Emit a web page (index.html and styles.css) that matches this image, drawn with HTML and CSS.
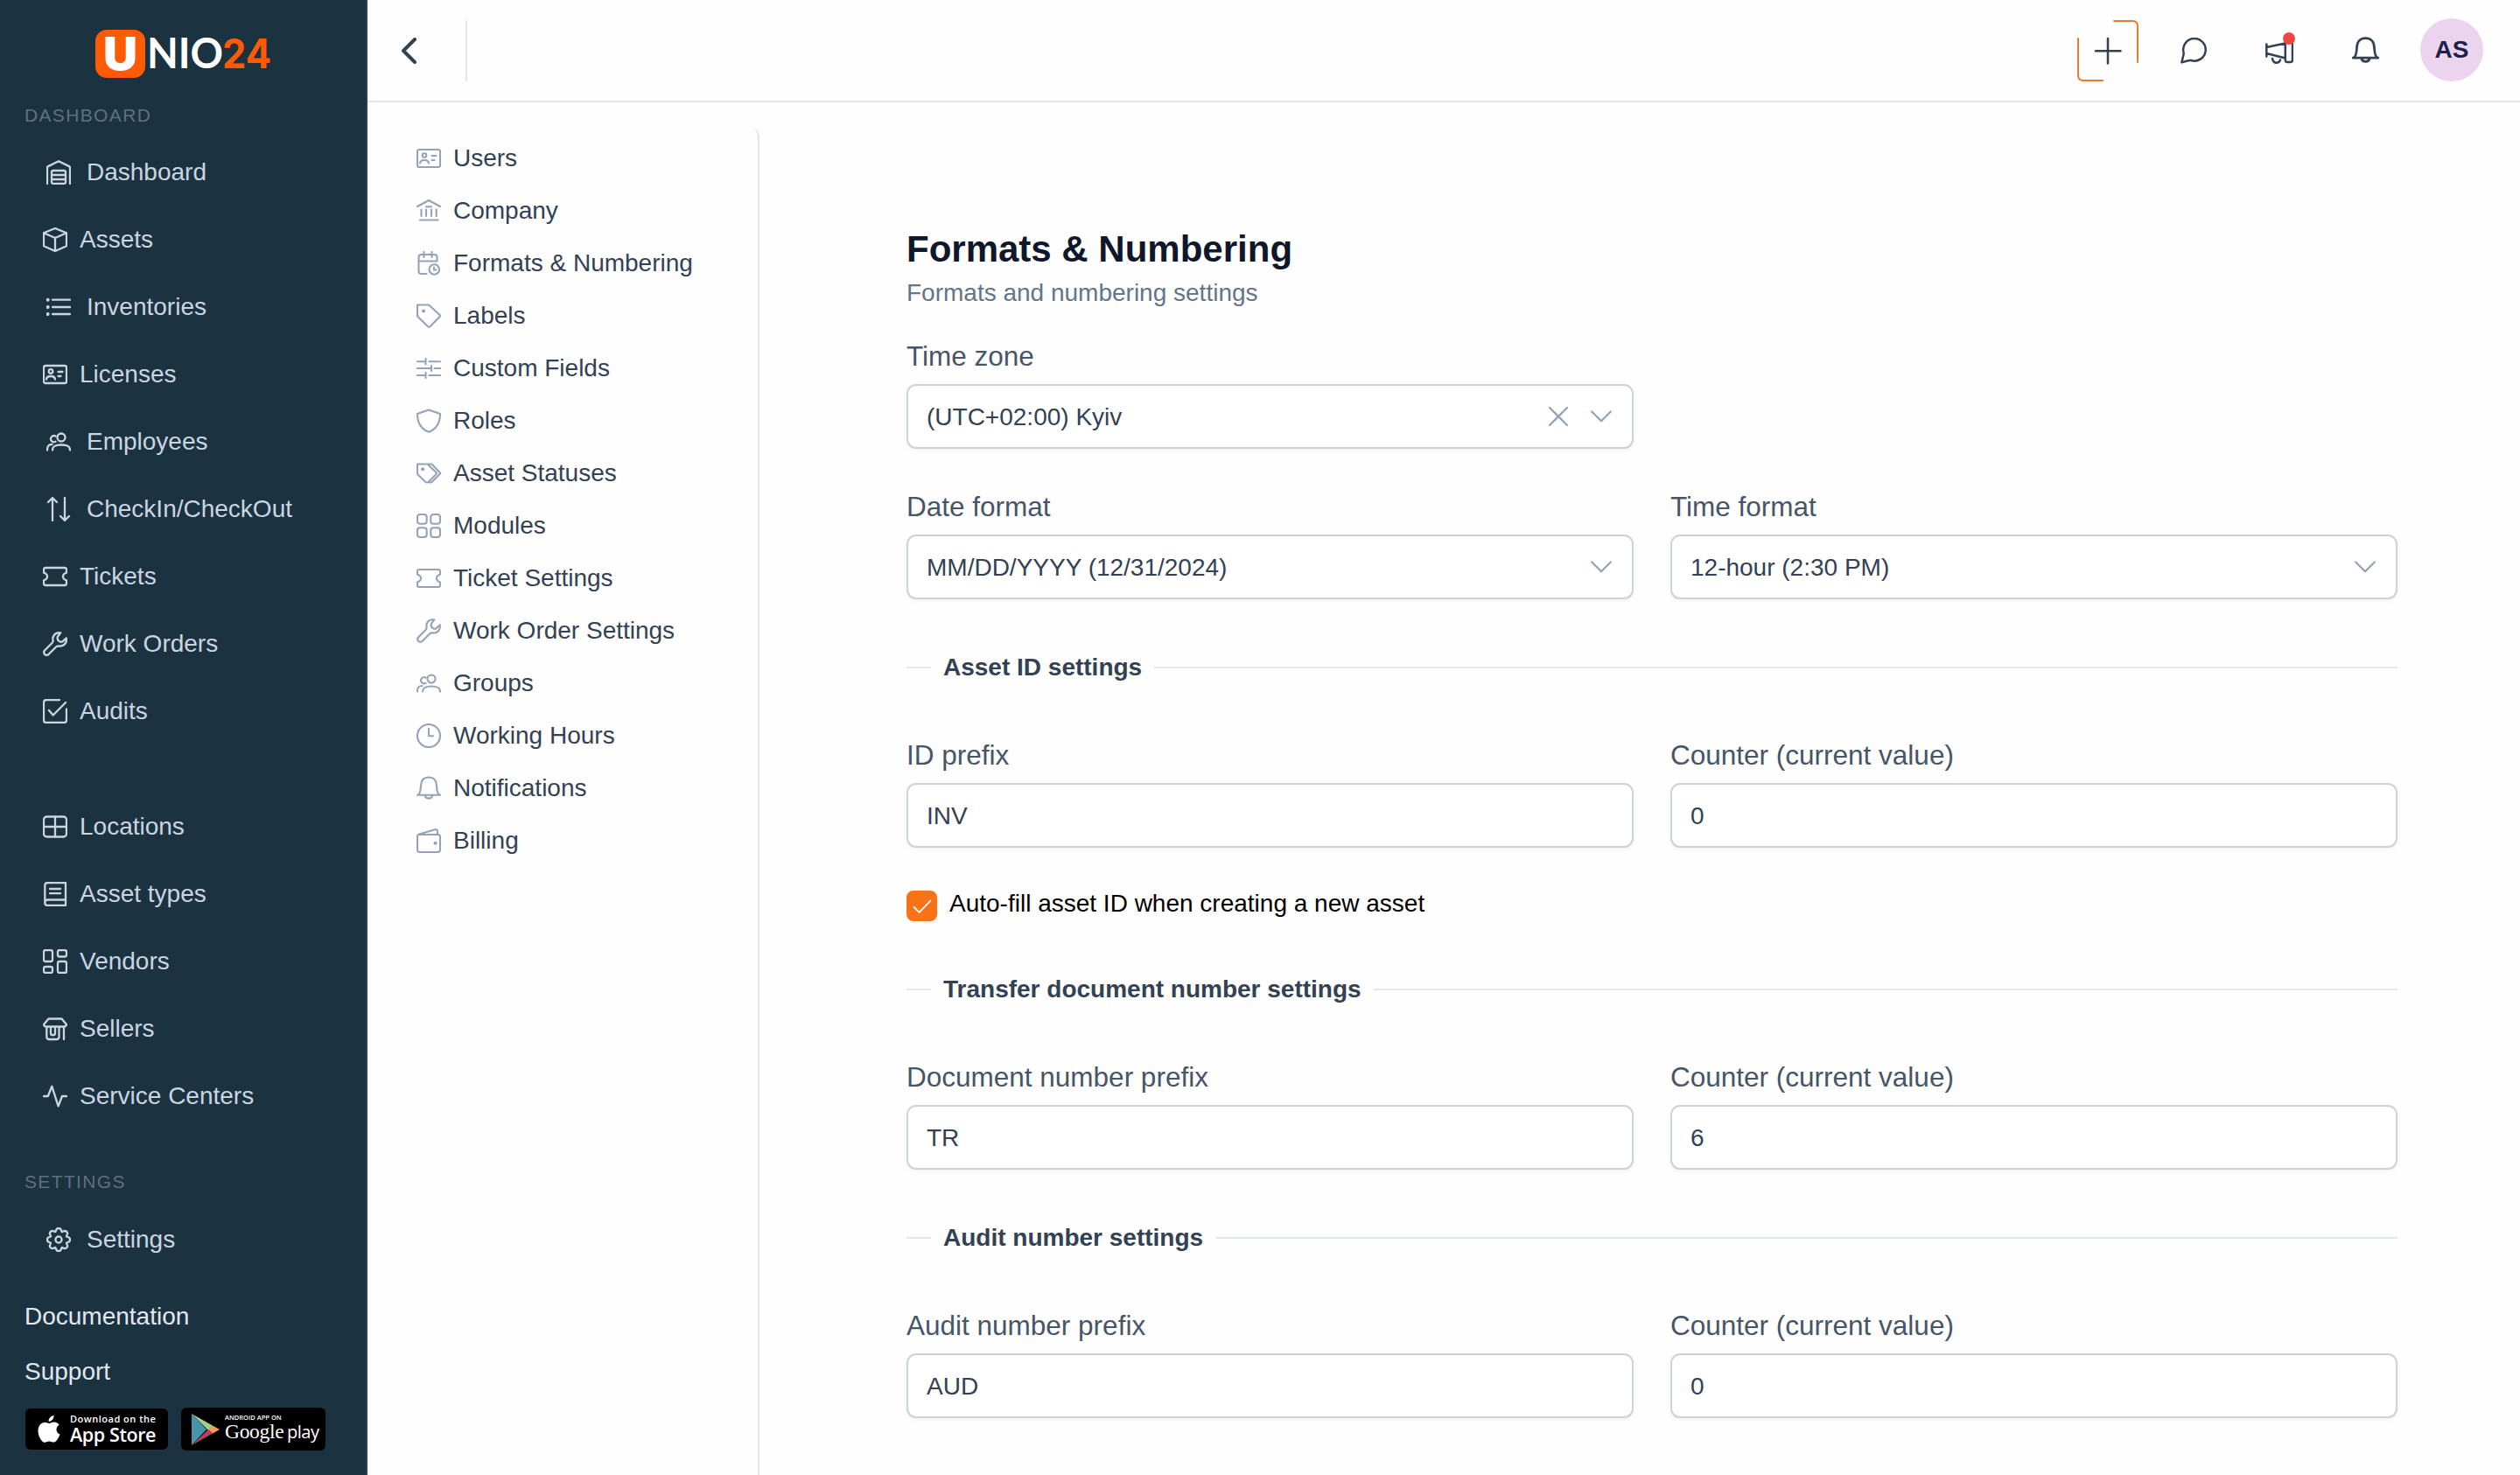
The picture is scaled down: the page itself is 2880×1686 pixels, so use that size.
FILE: index.html
```html
<!DOCTYPE html>
<html lang="en">
<head>
<meta charset="utf-8">
<title>Formats &amp; Numbering</title>
<link rel="stylesheet" href="styles.css">
</head>
<body>
<svg class="sprite" aria-hidden="true">
  <symbol id="warehouse" viewBox="0 0 28 28"><path d="M1 27V8.6Q1 7.6 2 7.1L14 1.2L26 7.1Q27 7.6 27 8.6V27M8 12H20Q22 12 22 14V25Q22 27 20 27H8Q6 27 6 25V14Q6 12 8 12ZM6 17H22M6 22H22"/></symbol>
  <symbol id="box" viewBox="0 0 28 28"><path d="M14 1L27 6.2V21.2L14 27L1 21.2V6.2ZM1 6.2L14 12L27 6.2M14 12V27"/></symbol>
  <symbol id="list" viewBox="0 0 28 28"><path d="M7 5.7H27M7 14H27M7 22H27"/><path class="thick" d="M1.6 5.7h.1M1.6 14h.1M1.6 22h.1"/></symbol>
  <symbol id="idcard" viewBox="0 0 28 28"><rect x="1" y="4" width="26" height="20" rx="2"/><circle cx="9" cy="10.5" r="2.3"/><path d="M4 19.5Q4.500 16 9 16T14 19.500M17.500 11H22.500M17.500 16H20.500"/></symbol>
  <symbol id="users" viewBox="0 0 28 28"><circle cx="17" cy="9" r="4.500"/><path d="M10.500 7.600A3.600 3.600 0 1 0 10.500 13.800M7 23.500C7 19 10 17.500 17 17.500S27 19 27 23.500M1 23.500C1 18.500 2.500 17 6.500 17"/></symbol>
  <symbol id="sort" viewBox="0 0 28 28"><path d="M7 27V1.500M2 6L7 1.200L12 6M21 1V26.500M16 22L21 26.800L26 22"/></symbol>
  <symbol id="ticket" viewBox="0 0 28 28"><path d="M3 4H25Q27 4 27 6V9.600C21.600 11.400 21.600 16.600 27 18.400V22Q27 24 25 24H3Q1 24 1 22V18.400C6.400 16.600 6.400 11.400 1 9.600V6Q1 4 3 4Z"/></symbol>
  <symbol id="wrench" viewBox="0 0 28 28"><path d="M20.300 1.400Q15.500 .6 12.800 4Q10.800 6.500 11.600 10.500Q11.500 12 10.500 13L2 21.500Q.3 23.500 2 25.800Q4.300 27.800 6.500 26L15 17.500Q16 16.500 17.500 16.400Q22.500 17.200 25.200 14Q27.600 11.200 26.700 7.300L22.500 11.300Q20.300 12.500 18.200 10.600Q15.900 8.600 16.900 5.800Z"/></symbol>
  <symbol id="checksq" viewBox="0 0 28 28"><path d="M19 1H4Q1 1 1 4V24Q1 27 4 27H24Q27 27 27 24V11.500M6.800 12.800L11.700 18.500L26 4"/></symbol>
  <symbol id="table" viewBox="0 0 28 28"><rect x="1" y="2.500" width="26" height="23" rx="3.500"/><path d="M14 2.500V25.500M1 14H27"/></symbol>
  <symbol id="book" viewBox="0 0 28 28"><path d="M26 1V27H5.500Q2.300 27 2.300 24V4.500Q2.300 1 5.500 1ZM26 20.500H5.500Q2.300 20.500 2.300 24M8 8H20M8 13.200H20"/></symbol>
  <symbol id="objects" viewBox="0 0 28 28"><rect x="1" y="1" width="10" height="13" rx="2"/><rect x="17" y="1" width="10" height="7.500" rx="2"/><rect x="1" y="20" width="10" height="7" rx="2"/><rect x="17" y="14" width="10" height="13" rx="2"/></symbol>
  <symbol id="shop" viewBox="0 0 28 28"><path d="M6.500 2.500H21.500L27 9Q26.500 11.500 24 11.500H4Q1.500 11.500 1 9ZM4.300 11.500V23Q4.300 26 7.300 26H15.500Q18.500 26 18.500 23V11.500M24 11.500V26M9 12V19Q9 21 10.500 21H12.500Q14 21 14 19V12"/></symbol>
  <symbol id="wave" viewBox="0 0 28 28"><path d="M1 14H5.800L10.300 2.700L17.600 25.300L22 14H27"/></symbol>
  <symbol id="cog" viewBox="-14 -14 28 28"><path d="M12.200-2.200Q13.800 0 12.200 2.200L8.900 3.700L10.200 7.100Q9.800 9.800 7.100 10.200L3.700 8.900L2.200 12.200Q0 13.800-2.200 12.200L-3.700 8.900L-7.100 10.200Q-9.800 9.800-10.200 7.100L-8.900 3.700L-12.200 2.200Q-13.800 0-12.200-2.200L-8.900-3.700L-10.200-7.100Q-9.800-9.800-7.100-10.200L-3.700-8.900L-2.200-12.200Q0-13.800 2.200-12.200L3.700-8.900L7.100-10.200Q9.800-9.800 10.200-7.100L8.900-3.700Z"/><circle r="3.600"/></symbol>
  <symbol id="bank" viewBox="0 0 28 28"><path d="M1 9L14 2L27 9M11 9.200H17M5.500 12.500V20M11 12.500V20M17 12.500V20M22.700 12.500V20M4 24.500H24.500"/></symbol>
  <symbol id="calclock" viewBox="0 0 28 28"><path d="M11.500 26H5.500Q2.500 26 2.500 23V7Q2.500 4 5.500 4H20.500Q23.500 4 23.500 7V11.500H2.500M8.500 1V7M17.500 1V7M20 18.500V21.500H22.500"/><circle cx="20.300" cy="21" r="5.800"/></symbol>
  <symbol id="tag" viewBox="0 0 28 28"><path d="M1 1.500H14L26.300 12.700Q27.500 14 26.300 15.300L15.800 26Q14.300 27.200 12.800 26L1 14.500Z"/><path class="thick" d="M8 8.500h.1"/></symbol>
  <symbol id="sliders" viewBox="0 0 28 28"><path d="M1 6.200H10.500M14.500 6.200H27M10.500 3V9.500M1 14H16.500M20.500 14H27M17 11V17M1 22H10.500M14.500 22H27M10.500 19V25"/></symbol>
  <symbol id="shield" viewBox="0 0 28 28"><path d="M1 6L14 1.500L27 6C27 16.500 22.500 23.500 14 26.800C5.500 23.500 1 16.500 1 6Z"/></symbol>
  <symbol id="tags" viewBox="0 0 28 28"><path d="M1 3.500H12.500L22.500 13Q23.500 14 22.500 15L13.500 24Q12 25 10.500 24L1 15ZM12.500 3.500H17.500L26.500 13Q27.500 14 26.500 15L17.500 24Q16 25 14.500 24.200"/><path class="thick" d="M7 9.300h.1"/></symbol>
  <symbol id="grid" viewBox="0 0 28 28"><rect x="1" y="1" width="10.700" height="10.700" rx="3"/><rect x="16.300" y="1" width="10.700" height="10.700" rx="3"/><rect x="1" y="16.300" width="10.700" height="10.700" rx="3"/><rect x="16.300" y="16.300" width="10.700" height="10.700" rx="3"/></symbol>
  <symbol id="clock" viewBox="0 0 28 28"><circle cx="14" cy="14" r="13"/><path d="M14 6V14.300H19"/></symbol>
  <symbol id="bell" viewBox="0 0 28 28"><path d="M1 21.800C4.500 21.500 4.800 15 5 11C5.200 4.500 9 1.500 14 1.500S22.800 4.500 23 11C23.200 15 23.500 21.500 27 21.800ZM9.800 22.500A4.300 4 0 0 0 18.200 22.500"/></symbol>
  <symbol id="wallet" viewBox="0 0 28 28"><rect x="1" y="7" width="26" height="20" rx="2.500"/><path d="M3 6.500L21 1.200Q24 .8 24 3.500V7"/><path class="thick" d="M21.500 16.800h.1"/></symbol>
  <symbol id="chev" viewBox="0 0 28 28"><path d="M3.200 8.500L14 19.300L24.800 8.500"/></symbol>
</svg>

<div class="app">
  <aside class="sidebar">
    <a class="logo">
      <svg viewBox="0 0 220 60" width="220" height="60">
        <rect width="57" height="55" rx="13" fill="#ff5a05"/>
        <text x="9" y="45.500" class="logo-u" textLength="39" lengthAdjust="spacingAndGlyphs">U</text>
        <text x="59" y="44" class="logo-name" textLength="87" lengthAdjust="spacingAndGlyphs">NIO</text>
        <text x="145" y="44" class="logo-num" textLength="56" lengthAdjust="spacingAndGlyphs">24</text>
      </svg>
    </a>
    <h6 class="kicker">DASHBOARD</h6>
    <nav class="nav">
      <a class="group"><svg><use href="#warehouse"/></svg>Dashboard</a>
      <a><svg><use href="#box"/></svg>Assets</a>
      <a class="group"><svg><use href="#list"/></svg>Inventories</a>
      <a><svg><use href="#idcard"/></svg>Licenses</a>
      <a class="group"><svg><use href="#users"/></svg>Employees</a>
      <a class="group"><svg><use href="#sort"/></svg>CheckIn/CheckOut</a>
      <a><svg><use href="#ticket"/></svg>Tickets</a>
      <a><svg><use href="#wrench"/></svg>Work Orders</a>
      <a><svg><use href="#checksq"/></svg>Audits</a>
    </nav>
    <nav class="nav nav-second">
      <a><svg><use href="#table"/></svg>Locations</a>
      <a><svg><use href="#book"/></svg>Asset types</a>
      <a><svg><use href="#objects"/></svg>Vendors</a>
      <a><svg><use href="#shop"/></svg>Sellers</a>
      <a><svg><use href="#wave"/></svg>Service Centers</a>
    </nav>
    <h6 class="kicker kicker-settings">SETTINGS</h6>
    <nav class="nav">
      <a class="group"><svg><use href="#cog"/></svg>Settings</a>
    </nav>
    <div class="links"><a>Documentation</a><a>Support</a></div>
    <div class="stores">
      <a class="store apple">
        <svg viewBox="0 0 26 32" width="26" height="32"><path d="M18.500 0C18.800 3.500 15.800 7 12.600 6.800C12.200 3.600 15.300 .4 18.500 0ZM13.300 9C14.500 9 16.300 7.600 18.900 7.600C21.200 7.600 23.400 8.900 24.600 10.700C20 13.500 20.800 19.700 25.500 21.600C24.500 24.500 21.800 30.500 18.500 30.600C16.500 30.700 15.600 29.400 13.300 29.400S10 30.600 8.200 30.700C4.500 30.900 .5 23.500 .5 17.500C.5 11.200 4.500 7.800 8.300 7.700C10.600 7.700 12.100 9 13.300 9Z" fill="#fff"/></svg>
        <span class="store-text"><small>Download on the</small><b>App Store</b></span>
      </a>
      <a class="store google">
        <svg viewBox="0 0 32 36" width="32" height="36"><path d="M0 0L17 18L0 36Z" fill="#4596ad"/><path d="M0 0L24 13.500L19 19Z" fill="#9fd08c"/><path d="M24 13.500L32 18L24 22.500L19 18Z" fill="#f59a57"/><path d="M19 18L24 22.500L0 36Z" fill="#b8405e"/></svg>
        <span class="store-text"><small>ANDROID APP ON</small><span class="gp"><i>Google</i> play</span></span>
      </a>
    </div>
  </aside>

  <div class="page">
    <header class="topbar">
      <a class="back"><svg viewBox="0 0 17 30" width="17" height="30"><path d="M15 2L2 15L15 28"/></svg></a>
      <div class="actions">
        <a class="action add">
          <svg viewBox="0 0 70 70" width="70" height="70"><path class="corner" d="M42 1H63Q69 1 69 7V48M1 21V63Q1 69 7 69H29"/><path d="M35 21V49.500M21 35.200H49.500"/></svg>
        </a>
        <a class="action"><svg viewBox="0 0 30 30" width="30" height="30"><path d="M3.400 16.500Q4 18.500 3.200 20.500L1.400 28.400L9 26.300Q10.500 25.800 12 26A12.800 12.800 0 1 0 3.400 16.500Z"/></svg></a>
        <a class="action mega"><svg viewBox="0 0 32 30" width="32" height="30"><path d="M1.300 7.500V21.500M1.300 11L22.800 6.500M1.300 18L22.800 23.500M25 1.300H28.500Q31 1.300 31 4V25.500Q31 28 28.500 28H25Q22.800 28 22.800 25.500V4Q22.800 1.300 25 1.300ZM8 24Q9 28.800 12.500 28.800T17 25.500"/></svg><span class="dot"></span></a>
        <a class="action"><svg width="31" height="31"><use href="#bell"/></svg></a>
        <a class="avatar">AS</a>
      </div>
    </header>

    <div class="body">
      <nav class="menu">
        <a><svg><use href="#idcard"/></svg>Users</a>
        <a><svg><use href="#bank"/></svg>Company</a>
        <a><svg><use href="#calclock"/></svg>Formats &amp; Numbering</a>
        <a><svg><use href="#tag"/></svg>Labels</a>
        <a><svg><use href="#sliders"/></svg>Custom Fields</a>
        <a><svg><use href="#shield"/></svg>Roles</a>
        <a><svg><use href="#tags"/></svg>Asset Statuses</a>
        <a><svg><use href="#grid"/></svg>Modules</a>
        <a><svg><use href="#ticket"/></svg>Ticket Settings</a>
        <a><svg><use href="#wrench"/></svg>Work Order Settings</a>
        <a><svg><use href="#users"/></svg>Groups</a>
        <a><svg><use href="#clock"/></svg>Working Hours</a>
        <a><svg><use href="#bell"/></svg>Notifications</a>
        <a><svg><use href="#wallet"/></svg>Billing</a>
      </nav>

      <main class="content">
        <h1>Formats &amp; Numbering</h1>
        <p class="lead">Formats and numbering settings</p>
        <div class="row">
          <div class="field"><label>Time zone</label>
            <div class="control"><span>(UTC+02:00) Kyiv</span>
              <svg class="clear" viewBox="0 0 28 28"><path d="M4 4L24 24M24 4L4 24"/></svg><svg><use href="#chev"/></svg></div></div>
        </div>
        <div class="row">
          <div class="field"><label>Date format</label>
            <div class="control"><span>MM/DD/YYYY (12/31/2024)</span><svg><use href="#chev"/></svg></div></div>
          <div class="field"><label>Time format</label>
            <div class="control"><span>12-hour (2:30 PM)</span><svg><use href="#chev"/></svg></div></div>
        </div>
        <h2 class="divider">Asset ID settings</h2>
        <div class="row">
          <div class="field"><label>ID prefix</label><div class="control"><span>INV</span></div></div>
          <div class="field"><label>Counter (current value)</label><div class="control"><span>0</span></div></div>
        </div>
        <div class="check"><span class="checkbox"><svg viewBox="0 0 28 28"><path d="M3 15L10 22L25 6.500"/></svg></span><span class="check-label">Auto-fill asset ID when creating a new asset</span></div>
        <h2 class="divider">Transfer document number settings</h2>
        <div class="row">
          <div class="field"><label>Document number prefix</label><div class="control"><span>TR</span></div></div>
          <div class="field"><label>Counter (current value)</label><div class="control"><span>6</span></div></div>
        </div>
        <h2 class="divider">Audit number settings</h2>
        <div class="row">
          <div class="field"><label>Audit number prefix</label><div class="control"><span>AUD</span></div></div>
          <div class="field"><label>Counter (current value)</label><div class="control"><span>0</span></div></div>
        </div>
      </main>
    </div>
  </div>
</div>
</body>
</html>
```
FILE: styles.css
```css
* { box-sizing: border-box; margin: 0; }

body {
  font: 28px/42px "Liberation Sans", Arial, sans-serif;
  color: #334155;
  background: #fefefe;
}

.sprite { position: absolute; width: 0; height: 0; }

svg {
  flex: none;
  fill: none;
  stroke: currentColor;
  stroke-width: 2.1;
  stroke-linecap: round;
  stroke-linejoin: round;
}
.thick { stroke-width: 4; }

.app { display: flex; height: 1686px; overflow: hidden; }

/* Sidebar */
.sidebar {
  flex: none;
  width: 420px;
  background: #1b3240;
  border-right: 2px solid #2d3f56;
  color: #cbd5e1;
}
.logo { display: block; height: 56px; margin: 34px 0 0 109px; }
.logo svg { display: block; stroke: none; overflow: visible; }
.logo text { font-family: Inter, sans-serif; fill: #fff; }
.logo .logo-u { font-size: 52px; font-weight: 900; }
.logo .logo-name { font-family: Lato, sans-serif; font-size: 47px; font-weight: 700; }
.logo .logo-num { font-size: 46px; font-weight: 700; fill: #ff5a05; }

.kicker {
  height: 16px;
  margin: 26px 0 26px 28px;
  font-size: 21px;
  font-weight: 400;
  line-height: 31px;
  letter-spacing: 1.35px;
  color: #5f7083;
}
.nav a {
  display: flex;
  align-items: center;
  gap: 14px;
  height: 77px;
  padding-left: 49px;
}
.nav a.group { gap: 18px; padding-left: 53px; }
.nav svg { width: 28px; height: 28px; stroke-width: 2.3; }
.nav-second { margin-top: 55px; }
.kicker-settings { margin: 44px 0 27px 28px; }
.links { margin: 29px 0 0 28px; color: #e2e8f0; }
.links a { display: block; height: 63px; line-height: 42px; }
.stores { display: flex; align-items: center; gap: 15px; margin: -1px 0 0 29px; }
.store { display: flex; align-items: center; background: #000; color: #fff; border-radius: 6px; }
.store svg { stroke: none; }
.store-text { display: flex; flex-direction: column; white-space: nowrap; }
.apple { width: 163px; height: 47px; padding-left: 14px; gap: 11px; font-family: "Open Sans", sans-serif; }
.apple small { font-size: 11px; line-height: 14px; letter-spacing: .5px; font-weight: 600; }
.apple b { font-size: 21.5px; line-height: 21px; padding-bottom: 3px; font-weight: 600; letter-spacing: -.4px; }
.google { width: 165px; height: 49px; padding-left: 12px; gap: 6px; font-family: "Open Sans", sans-serif; }
.google small { font-size: 7.5px; line-height: 10px; font-weight: 600; }
.gp { font-size: 20px; line-height: 22px; padding-bottom: 4px; letter-spacing: -.5px; word-spacing: -1px; }
.gp i { font: 23.5px/22px "Liberation Serif", serif; letter-spacing: -.3px; }

/* Top bar */
.page { flex: 1; display: flex; flex-direction: column; }
.topbar {
  flex: none;
  display: flex;
  align-items: center;
  justify-content: space-between;
  height: 117px;
  padding-right: 42px;
  border-bottom: 2px solid #e4e6ea;
  color: #334155;
}
.back {
  display: flex;
  align-items: center;
  width: 114px;
  height: 70px;
  padding-left: 39px;
  border-right: 2px solid #e4e6ea;
}
.back svg { stroke-width: 4; }
.actions { display: flex; align-items: center; gap: 28px; }
.action { position: relative; display: flex; align-items: center; justify-content: center; width: 70px; height: 70px; }
.action svg { stroke-width: 2.5; }
.action .corner { stroke: #e87b2c; stroke-width: 2; }
.dot { position: absolute; left: 39px; top: 14px; width: 14px; height: 14px; border-radius: 50%; background: #ef4444; }
.avatar {
  width: 72px;
  height: 72px;
  margin-top: -1px;
  border-radius: 50%;
  background: #ecd4ef;
  color: #1b214c;
  font-weight: 700;
  line-height: 72px;
  text-align: center;
}

/* Settings menu */
.body { flex: 1; display: flex; align-items: stretch; min-height: 0; }
.menu {
  flex: none;
  width: 448px;
  margin-top: 28px;
  padding: 6px 0 0 56px;
  border-right: 2px solid #e2e4e8;
  border-top-right-radius: 12px;
}
.menu a { display: flex; align-items: center; gap: 14px; height: 60px; }
.menu svg { width: 28px; height: 28px; color: #94a3b8; }

/* Form */
.content { flex: 1; padding: 142px 140px 0 168px; }
h1 { font-size: 42px; line-height: 52px; color: #0f172a; }
.lead { margin-top: 3px; color: #64748b; }
.row { display: grid; grid-template-columns: 1fr 1fr; gap: 42px; }
.lead + .row { margin-top: 28px; }
.row + .row { margin-top: 43px; }
label { display: block; margin-bottom: 8px; font-size: 31.5px; line-height: 47px; color: #475569; }
.control {
  display: flex;
  align-items: center;
  gap: 21px;
  height: 74px;
  padding: 0 21px;
  border: 2px solid #cbd3dd;
  border-radius: 11px;
  background: #fff;
  box-shadow: 0 2px 4px rgba(18, 18, 23, .05);
}
.control span { flex: 1; padding-top: 2px; }
.control svg { width: 28px; height: 28px; color: #94a3b8; stroke-width: 2.3; }
.divider {
  display: flex;
  align-items: center;
  gap: 14px;
  height: 42px;
  margin: 57px 0 56px;
  font-size: 28px;
  line-height: 42px;
}
.divider::before, .divider::after { content: ""; width: 28px; height: 2px; background: #e4e8ec; }
.divider::after { flex: 1; }
.check { display: flex; gap: 14px; height: 42px; margin-top: 42px; color: #000; }
.check-label { padding-top: 1px; }
.checkbox {
  display: flex;
  align-items: center;
  justify-content: center;
  width: 35px;
  height: 35px;
  margin-top: 7px;
  border-radius: 8px;
  background: #f97316;
  color: #fff;
}
.checkbox svg { width: 24px; height: 24px; }
```
